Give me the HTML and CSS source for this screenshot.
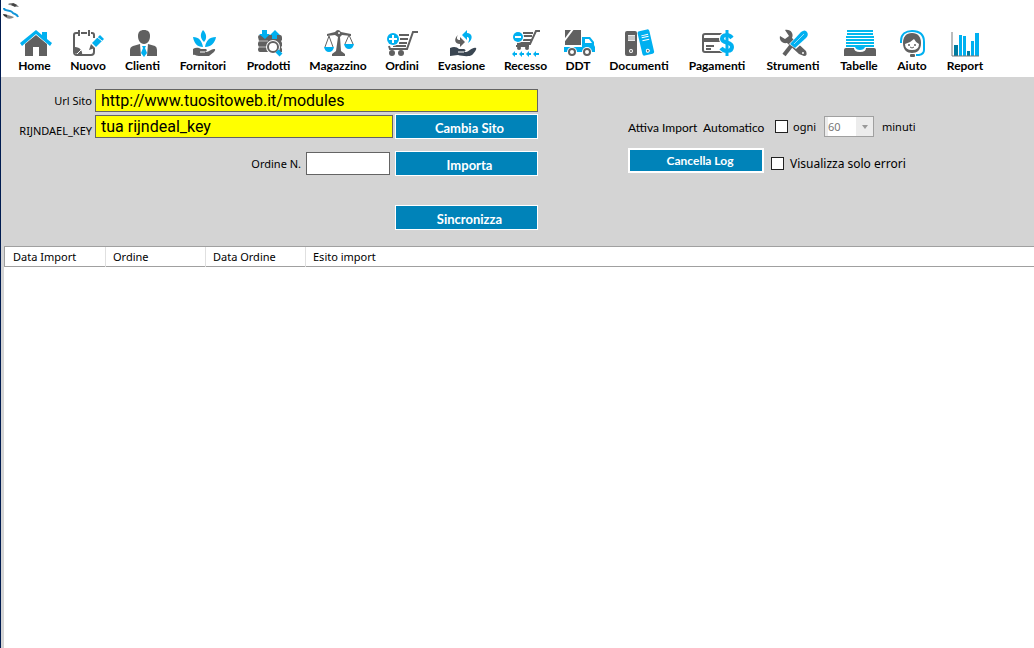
FILE: index.html
```html
<!DOCTYPE html>
<html lang="it">
<head>
<meta charset="utf-8">
<meta name="viewport" content="width=device-width, initial-scale=1">
<title>Importa ordini</title>
<link rel="stylesheet" href="styles.css">
</head>
<body>
<div class="window">
  <header class="titlebar">
    <svg class="logo" viewBox="0 0 18 18" aria-hidden="true">
      <path d="M5 2C8 0 13 1 16 5C12 5 9 3 6 3Z" fill="#888"/><path d="M10 1L14 3L12 5L8 3Z" fill="#444"/>
      <path d="M1 6C1 10 7 7 9 10S14 11 15 15" fill="none" stroke="#1295d8" stroke-width="2"/>
      <path d="M0 12C4 12 7 14 11 15C8 18 2 17 0 12Z" fill="#888"/><path d="M0 12L4 13V15L1 14Z" fill="#333"/>
    </svg>
  </header>

  <nav class="toolbar" aria-label="Principale">
    <button class="tool" type="button">
      <svg class="icon" viewBox="0 0 32 28" aria-hidden="true"><path class="dark" d="M5 15L16 6L27 15V27H19V18H13V27H5Z"/><path class="blue" d="M0 14L16 1L22 6V3H27V10L32 14L30 17L16 5L2 17Z"/></svg>
      <span>Home</span>
    </button>
    <button class="tool" type="button">
      <svg class="icon" viewBox="0 0 32 28" aria-hidden="true"><path class="line" d="M5 4H3Q1 4 1 6V23Q1 26 4 26H18Q21 26 21 23V19M21 9V6Q21 4 19 4H18M8 4H14M6 1V7M16 1V7"/><path class="dark" d="M2 18C7 18 10 22 9 27L2 24Z"/><path class="blue" d="M19 14L27 6L31 10L23 18Z"/><path class="dark" d="M18 15L22 19L16 21Z"/><path class="cut-thin" d="M24 8L29 12M4 25L8 21"/></svg>
      <span>Nuovo</span>
    </button>
    <button class="tool" type="button">
      <svg class="icon" viewBox="0 0 32 28" aria-hidden="true"><path class="dark" d="M16 1C20 1 22 3 22 7C22 11 20 15 16 15S10 11 10 7C10 3 12 1 16 1ZM2 27V21Q2 18 5 17L12 15L16 20L20 15L27 17Q29 18 29 21V27Z"/><path fill="#fff" d="M12 15L16 17L20 15L19 27H13Z"/><path class="blue" d="M14 17H18L17 19L19 24L16 28L13 24L15 19Z"/></svg>
      <span>Clienti</span>
    </button>
    <button class="tool" type="button">
      <svg class="icon" viewBox="0 0 32 28" aria-hidden="true"><path class="blue" d="M15 1C19 5 19 10 16 13C12 9 12 5 15 1ZM5 8C11 8 14 12 15 18C9 18 6 14 5 8ZM28 8C21 8 18 12 17 18C23 18 27 14 28 8Z"/><path class="dark" d="M5 20C8 18 11 19 13 20H18C20 21 18 23 16 23H12H18C21 23 23 20 26 20C28 20 27 22 26 23L21 27H11C8 27 7 25 5 26Z"/><path class="cut-thin" d="M12 23H17"/></svg>
      <span>Fornitori</span>
    </button>
    <button class="tool" type="button">
      <svg class="icon" viewBox="0 0 32 28" aria-hidden="true"><path class="dark" d="M4 8Q4 6 6 6H26Q28 6 28 9V11L27 12L28 14V17L27 18L28 20V23H6Q4 23 4 20L5 18L4 16V14L5 12Z"/><path class="cut-faint" d="M5 12H14M5 18H13"/><path class="blue" d="M8 1H13V5H16L11 10L5 5H8ZM18 10H23V6H26L21 1L16 6H18Z"/><circle cx="19" cy="18" r="7" fill="#fff"/><circle cx="19" cy="18" r="5" fill="#fff" stroke="#606060" stroke-width="2"/><path d="M23 22L27 26" stroke="#00b0f0" stroke-width="4"/></svg>
      <span>Prodotti</span>
    </button>
    <button class="tool" type="button">
      <svg class="icon" viewBox="0 0 32 28" aria-hidden="true"><path class="dark" d="M4 5L12 3Q15 -1 18 3L28 5V7L19 6L17 8L18 22L22 25V27H9V25L13 22L15 8L12 6L4 7Z"/><circle cx="16" cy="4" r="1" fill="#fff"/><path class="hair" d="M6 7L2 18M6 7L10 18M26 6L22 15M26 6L30 15"/><path class="blue" d="M1 18H11Q10 23 6 23T1 18ZM21 15H31Q30 20 26 20T21 15Z"/></svg>
      <span>Magazzino</span>
    </button>
    <button class="tool" type="button">
      <svg class="icon" viewBox="0 0 32 28" aria-hidden="true"><path class="line" d="M31 3H26L20 20H3L2 17M12 6H22M13 10H21M12 14H20M6 17H19"/><circle class="dark" cx="5" cy="24" r="3"/><circle class="dark" cx="14" cy="24" r="3"/><circle cx="6" cy="10" r="7" fill="#fff"/><circle class="blue" cx="6" cy="10" r="6"/><path class="cut" d="M2 10H10M6 6V14"/></svg>
      <span>Ordini</span>
    </button>
    <button class="tool" type="button">
      <svg class="icon" viewBox="0 0 32 28" aria-hidden="true"><path fill="#3a4652" d="M3 19C7 17 10 18 12 20H17C20 21 18 23 16 23H12H19C22 23 25 18 29 19C30 20 28 23 25 26C22 28 15 27 11 26L3 27Z"/><path class="cut-thin" d="M11 23H17"/><path class="blue" d="M15 6L20 1V4C25 4 27 10 21 14C23 10 22 8 20 8V11Z"/><path class="dark" d="M11 6C9 9 10 11 13 11V8L18 13L13 18V15C7 15 7 9 11 6Z"/></svg>
      <span>Evasione</span>
    </button>
    <button class="tool" type="button">
      <svg class="icon" viewBox="0 0 32 28" aria-hidden="true"><path class="line" d="M29 2H25L19 15H6M12 4H22M12 7H21M12 11H20M6 14H19M5 17H18"/><circle class="dark" cx="8" cy="19" r="2"/><circle class="dark" cx="16" cy="19" r="2"/><circle cx="7" cy="8" r="6" fill="#fff"/><circle class="blue" cx="7" cy="8" r="5"/><path class="cut" d="M4 8H10"/><path class="blue" d="M1 25L4 22V24H6V26H4V28ZM8 25L11 22V24H13V26H11V28ZM15 25L18 22V24H20V26H18V28ZM22 25L25 22V24H28V26H25V28Z"/></svg>
      <span>Recesso</span>
    </button>
    <button class="tool" type="button">
      <svg class="icon" viewBox="0 0 32 28" aria-hidden="true"><path class="dark" d="M2 1H18V16H2Z"/><path class="cut" d="M1 12L10 0"/><path class="blue" d="M19 8H27L31 13V16L32 18V23H1V18H19Z"/><path fill="#fff" d="M22 10H26L29 14H22Z"/><circle cx="9" cy="23" r="5" fill="#fff"/><circle cx="24" cy="23" r="5" fill="#fff"/><circle class="line" cx="9" cy="23" r="3"/><circle class="line" cx="24" cy="23" r="3"/></svg>
      <span>DDT</span>
    </button>
    <button class="tool" type="button">
      <svg class="icon" viewBox="0 0 32 28" aria-hidden="true"><rect class="dark" x="1" y="2" width="12" height="25" rx="2"/><path fill="#e8e8e8" d="M4 6H11V12H4Z"/><path class="hair" d="M4 8H11M4 10H11" stroke-opacity=".5"/><circle cx="7" cy="22" r="2" fill="#fff"/><circle class="dark" cx="7" cy="22" r="1"/><g transform="rotate(-13 22 14)"><rect class="blue" x="16" y="1" width="12" height="25" rx="2"/><path class="cut-thin" d="M19 6H26M19 8H26M19 11H26"/><circle cx="22" cy="22" r="2" fill="#fff"/><circle class="dark" cx="22" cy="22" r="1"/></g></svg>
      <span>Documenti</span>
    </button>
    <button class="tool" type="button">
      <svg class="icon" viewBox="0 0 32 28" aria-hidden="true"><rect class="line" x="1" y="5" width="24" height="18" rx="2"/><path class="dark" d="M1 9H20V13H1Z"/><path class="line" d="M4 17H12M4 20H9"/><path class="outline" d="M30 8C27 4 20 5 20 10C20 15 30 12 30 18C30 23 22 23 19 19M25 1V27"/><path class="dollar" d="M30 9C27 5 20 5 20 10C20 15 30 12 30 18C30 23 22 23 19 19"/><path d="M25 1V27" stroke="#00b0f0" stroke-width="3"/></svg>
      <span>Pagamenti</span>
    </button>
    <button class="tool" type="button">
      <svg class="icon" viewBox="0 0 32 28" aria-hidden="true"><path class="dark" d="M7 1C13 0 16 5 14 9L28 22Q30 27 26 27L21 25L9 14C4 15 1 11 2 7L7 10L11 7Z"/><circle cx="25" cy="24" r="1" fill="#fff"/><path d="M13 17L6 26" stroke="#606060" stroke-width="4"/><path fill="#fff" d="M11 15L23 3L30 2L30 9L18 20Z"/><path class="blue" d="M12 15L23 3Q27 0 29 3Q31 6 28 9L17 19Z"/><path class="cut-faint" d="M16 15L26 5"/></svg>
      <span>Strumenti</span>
    </button>
    <button class="tool" type="button">
      <svg class="icon" viewBox="0 0 32 28" aria-hidden="true"><path d="M3 2H29M3 5H29M2 8H30M2 11H30M2 14H30M2 17H30" stroke="#00b8ee" stroke-width="2"/><path class="dark" d="M2 19H10Q10 23 16 23T22 19H30Q32 19 32 21V27H0V21Q0 19 2 19Z"/><path class="blue" d="M11 18H21Q20 21 16 21T11 18Z"/></svg>
      <span>Tabelle</span>
    </button>
    <button class="tool" type="button">
      <svg class="icon" viewBox="0 0 32 28" aria-hidden="true"><path class="ring" d="M4 14V12C4 5 9 2 15 2C23 2 27 6 27 13V21Q27 25 22 26H19"/><path class="dark" d="M15 4C21 4 24 8 24 14C24 21 20 24 15 24S6 21 6 14C6 8 9 4 15 4Z"/><path fill="#fff" d="M8 15Q13 14 17 10Q19 14 22 15Q22 21 15 21T8 15Z"/><circle class="dark" cx="12" cy="16" r="1"/><circle class="dark" cx="18" cy="16" r="1"/><path class="hair" d="M13 18Q15 20 17 18"/><rect class="dark" x="13" y="25" width="5" height="3" rx="1"/></svg>
      <span>Aiuto</span>
    </button>
    <button class="tool" type="button">
      <svg class="icon" viewBox="0 0 32 28" aria-hidden="true"><path fill="#007ba0" d="M4 16H8V27H4ZM17 22H20V27H17Z"/><path class="blue" d="M9 6H12V27H9ZM13 7H16V27H13ZM21 12H24V27H21ZM25 4H29V27H25Z"/><path d="M2 3V27H29" fill="none" stroke="#77787a"/></svg>
      <span>Report</span>
    </button>
  </nav>

  <main class="content">
    <form class="panel">
      <div class="source">
        <div class="row">
          <label class="caption" for="url">Url Sito</label>
          <input class="field key" id="url" type="text" value="http://www.tuositoweb.it/modules">
        </div>
        <div class="row">
          <label class="caption low" for="key">RIJNDAEL_KEY</label>
          <input class="field key" id="key" type="text" value="tua rijndeal_key">
          <button class="action" type="button">Cambia Sito</button>
        </div>
        <div class="row order">
          <label class="caption" for="order">Ordine N.</label>
          <input class="field number" id="order" type="text">
          <button class="action" type="button">Importa</button>
        </div>
        <div class="row sync">
          <button class="action" type="button">Sincronizza</button>
        </div>
      </div>

      <div class="options">
        <div class="option">
          <label class="auto" for="auto">Attiva Import&nbsp; Automatico</label>
          <input class="check" id="auto" type="checkbox">
          <label class="every" for="minutes">ogni</label>
          <span class="combo">
            <select class="minutes" id="minutes" disabled><option>60</option></select>
            <svg class="arrow" viewBox="0 0 6 4" aria-hidden="true"><path d="M0 0H6L3 4Z" fill="#999"/></svg>
          </span>
          <span class="unit">minuti</span>
        </div>
        <div class="option">
          <button class="action clear" type="button">Cancella Log</button>
          <input class="check errors-check" id="errors" type="checkbox">
          <label class="errors" for="errors">Visualizza solo errori</label>
        </div>
      </div>
    </form>

    <div class="log">
      <table class="grid">
        <colgroup><col class="first"><col class="col"><col class="col"><col></colgroup>
        <thead><tr><th>Data Import</th><th>Ordine</th><th>Data Ordine</th><th>Esito import</th></tr></thead>
      </table>
    </div>
  </main>
</div>
</body>
</html>
```
FILE: styles.css
```css
* { box-sizing: border-box; }

body {
  margin: 0;
  background: #fff;
  color: #000;
  font-family: "Noto Sans", sans-serif;
  font-size: 11px;
}

button, input, select { font: inherit; margin: 0; }

.window {
  display: flex;
  flex-direction: column;
  min-height: 100vh;
  border-left: 1px solid #001b50;
}

.titlebar { height: 29px; padding: 2px; }
.logo { display: block; width: 18px; height: 18px; }

.toolbar {
  display: grid;
  grid-template-columns: 33px 36px 35px 48px 45px 56px 34px 47px 43px 24px 60px 58px 56px 38px 30px 38px;
  column-gap: 19px;
  padding: 0 17px 2px;
}

.tool {
  display: flex;
  flex-direction: column;
  align-items: center;
  padding: 0;
  border: 0;
  background: none;
  color: #000;
  font-family: Lato, sans-serif;
  font-size: 12px;
  font-weight: 700;
  line-height: 18px;
  white-space: nowrap;
}

.icon { flex: none; width: 32px; height: 28px; margin-left: 2px; }
.dark { fill: #606060; }
.blue { fill: #00b0f0; }
.line { fill: none; stroke: #606060; stroke-width: 2; }
.hair { fill: none; stroke: #606060; }
.cut { stroke: #fff; stroke-width: 2; }
.cut-thin { stroke: #fff; stroke-width: 1; }
.cut-faint { stroke: #fff; stroke-opacity: .6; }
.ring { fill: none; stroke: #00b0f0; stroke-width: 2; }
.outline { fill: none; stroke: #fff; stroke-width: 6; }
.dollar { fill: none; stroke: #00b0f0; stroke-width: 4; }

.content {
  flex: 1;
  display: flex;
  flex-direction: column;
  padding-left: 3px;
  background: #d4d4d4;
}

.panel {
  display: flex;
  align-items: flex-start;
  gap: 90px;
  padding: 12px 0 16px;
}

.source { width: 534px; flex: none; }

.row {
  display: flex;
  align-items: center;
  justify-content: flex-end;
  gap: 2px;
  margin-bottom: 2px;
}

.caption { width: 88px; text-align: right; margin-right: 1px; }
.caption.low { padding-top: 8px; }

.field {
  height: 23px;
  border: 1px solid #646464;
  border-radius: 0;
  padding: 0 5px;
  background: #fff;
  outline: 0;
}

.key {
  flex: 1;
  min-width: 0;
  background: #ff0;
  font-family: Roboto, sans-serif;
  font-size: 16px;
}

.order { padding-top: 10px; }
.number { width: 84px; margin-right: 3px; margin-left: 2px; }
.sync { padding-top: 27px; margin-bottom: 0; }

.action {
  width: 143px;
  height: 25px;
  border: 1px solid #fff;
  padding: 3px 0 0 6px;
  background: #0083b9;
  color: #fff;
  font-family: Lato, sans-serif;
  font-size: 13px;
  font-weight: 700;
  line-height: 18px;
}

.options { padding-top: 27px; }
.option { display: flex; align-items: center; margin-bottom: 11px; white-space: nowrap; }
.auto { width: 147px; padding-top: 3px; font-family: Lato, sans-serif; font-size: 12px; line-height: 18px; }

.check {
  appearance: none;
  width: 13px;
  height: 13px;
  border: 1px solid #222;
  background: #fff;
}

.every { width: 31px; margin-left: 5px; }
.combo { position: relative; }

.minutes {
  appearance: none;
  display: block;
  width: 50px;
  height: 21px;
  padding: 0 3px;
  border: 1px solid #a0a0a0;
  border-radius: 0;
  background: linear-gradient(to right, #fff 28px, #ececec 28px) content-box, #ececec;
  color: #777;
  opacity: 1;
}

.arrow { position: absolute; right: 6px; top: 9px; width: 6px; height: 4px; }
.unit { margin-left: 8px; }

.clear {
  width: 136px;
  margin-right: 7px;
  border-width: 2px;
  padding: 0 0 0 8px;
  font-size: 12px;
}

.errors { margin-left: 6px; padding-top: 6px; font-size: 12px; }
.errors-check { margin-top: 6px; }
.check, .clear { flex: none; }

.log {
  flex: 1;
  border-top: 1px solid #a0a0a0;
  background: #fff;
}

.grid {
  width: 100%;
  table-layout: fixed;
  border-collapse: collapse;
  border-bottom: 1px solid #a0a0a0;
}

.first { width: 101px; }
.col { width: 100px; }

.grid th {
  height: 19px;
  padding: 2px 7px 0;
  border-right: 1px solid #e0e0e0;
  font-weight: 400;
  line-height: 16px;
  text-align: left;
}

.grid th:first-child { border-left: 1px solid #a0a0a0; padding-left: 8px; }
.grid th:last-child { border-right: 0; }
```
